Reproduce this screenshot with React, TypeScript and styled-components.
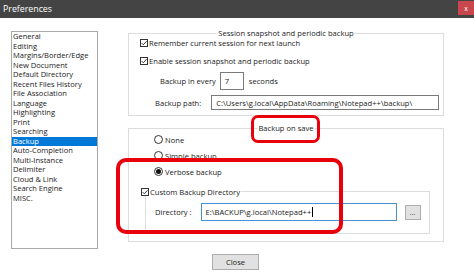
import React from "react";
import styled, { createGlobalStyle } from "styled-components";

const Global = createGlobalStyle`
  html, body { margin: 0; padding: 0; background: #ffffff; }
  body { font-family: "Open Sans", "Noto Sans", sans-serif; }
  * { box-sizing: border-box; }
`;

const FONT = `"Open Sans", "Noto Sans", sans-serif`;

const Window = styled.div`
  position: relative;
  width: 474px;
  height: 272px;
  background: #ffffff;
  display: flex;
  flex-direction: column;
  overflow: hidden;
  font-family: ${FONT};
  font-size: 7.6px;
  color: #1a1a1a;
`;

const TitleBar = styled.div`
  height: 18px;
  flex: none;
  background: #444444;
  display: flex;
  align-items: center;
  justify-content: space-between;
  padding-left: 3px;
`;

const Title = styled.span`
  color: #ffffff;
  font-size: 8.8px;
`;

const CloseX = styled.div`
  width: 16px;
  height: 14px;
  margin-bottom: 2px;
  background: #c8474d;
  color: #ffffff;
  font-size: 7px;
  display: flex;
  align-items: center;
  justify-content: center;
`;

const Body = styled.div`
  display: flex;
  padding: 13px 0 0 11px;
`;

const List = styled.ul`
  list-style: none;
  margin: 0;
  padding: 0;
  width: 87px;
  height: 218px;
  border: 1px solid #a9a9a9;
  flex: none;
  font-size: 7.55px;
`;

const Item = styled.li<{ $selected?: boolean }>`
  height: 9.5px;
  line-height: 9.5px;
  padding-left: 1px;
  white-space: nowrap;
  background: ${(p) => (p.$selected ? "#0078d7" : "transparent")};
  color: ${(p) => (p.$selected ? "#ffffff" : "#1a1a1a")};
`;

const Main = styled.div`
  margin-left: 30px;
  padding-top: 2px;
  width: 316px;
  display: flex;
  flex-direction: column;
  gap: 12px;
`;

const Group = styled.div<{ $h: number }>`
  position: relative;
  width: 316px;
  height: ${(p) => p.$h}px;
  border: 1px solid #dcdcdc;
`;

const Legend = styled.span`
  position: absolute;
  top: -6px;
  left: 50%;
  transform: translateX(-50%);
  background: #ffffff;
  padding: 0 1px;
  white-space: nowrap;
  line-height: 10px;
`;

const SessionBody = styled.div`
  display: flex;
  flex-direction: column;
  padding-top: 5px;
`;

const CheckRow = styled.label<{ $left: number; $mt?: number }>`
  display: flex;
  align-items: center;
  height: 8px;
  gap: 1px;
  padding-left: ${(p) => p.$left}px;
  margin-top: ${(p) => p.$mt ?? 0}px;
  white-space: nowrap;
`;

const FieldRow = styled.div<{ $left: number; $mt: number; $h: number }>`
  display: flex;
  align-items: center;
  height: ${(p) => p.$h}px;
  padding-left: ${(p) => p.$left}px;
  margin-top: ${(p) => p.$mt}px;
  white-space: nowrap;
`;

const TextBox = styled.div<{ $w: number; $h: number; $focus?: boolean }>`
  width: ${(p) => p.$w}px;
  height: ${(p) => p.$h}px;
  border: 1px solid ${(p) => (p.$focus ? "#4a90d4" : "#7a7a7a")};
  background: #ffffff;
  display: flex;
  align-items: center;
  padding-left: 4px;
  white-space: nowrap;
  overflow: hidden;
  flex: none;
`;

const Caret = styled.span`
  display: inline-block;
  width: 1px;
  height: 10px;
  background: #000;
  margin-left: 0.5px;
`;

const RadioList = styled.div`
  display: flex;
  flex-direction: column;
  gap: 7px;
  padding: 6px 0 0 25px;
`;

const RadioRow = styled.label`
  display: flex;
  align-items: center;
  gap: 2px;
  height: 9px;
  white-space: nowrap;
`;

const Circle = styled.span<{ $on?: boolean }>`
  width: 9px;
  height: 9px;
  border-radius: 50%;
  border: 1px solid #333;
  display: flex;
  align-items: center;
  justify-content: center;
  flex: none;
  &::after {
    content: "";
    width: 5px;
    height: 5px;
    border-radius: 50%;
    background: ${(p) => (p.$on ? "#111" : "transparent")};
  }
`;

const Inner = styled.div`
  position: relative;
  margin: 15px 0 0 16px;
  width: 285px;
  height: 43px;
  border: 1px solid #dcdcdc;
  padding: 11px 0 0 9px;
`;

const InnerHead = styled.label`
  position: absolute;
  top: -5px;
  left: -5px;
  display: flex;
  align-items: center;
  gap: 1px;
  height: 9px;
  background: #ffffff;
  padding-right: 1px;
  white-space: nowrap;
`;

const DirRow = styled.div`
  display: flex;
  align-items: center;
  height: 18px;
`;

const DotsButton = styled.div`
  width: 16px;
  height: 15px;
  margin-left: 8px;
  background: #e1e1e1;
  border: 1px solid #adadad;
  font-size: 7px;
  display: flex;
  align-items: center;
  justify-content: center;
  line-height: 1;
  color: #333;
`;

const Footer = styled.div`
  display: flex;
  justify-content: center;
  padding-right: 3px;
  margin-top: 5px;
`;

const Button = styled.div`
  width: 47px;
  height: 16px;
  background: #e1e1e1;
  border: 1px solid #adadad;
  display: flex;
  align-items: center;
  justify-content: center;
`;

const Annotation = styled.div<{ $x: number; $y: number; $w: number; $h: number; $t: number; $r: number }>`
  position: absolute;
  left: ${(p) => p.$x}px;
  top: ${(p) => p.$y}px;
  width: ${(p) => p.$w}px;
  height: ${(p) => p.$h}px;
  border: ${(p) => p.$t}px solid #e8000b;
  border-radius: ${(p) => p.$r}px;
  pointer-events: none;
`;

const CheckBox: React.FC = () => (
  <svg width="8" height="8" viewBox="0 0 8 8" style={{ flex: "none" }}>
    <rect x="0.5" y="0.5" width="7" height="7" fill="#fff" stroke="#333" strokeWidth="1" />
    <path d="M1.6 4.1 L3.3 5.8 L6.5 2.2" fill="none" stroke="#222" strokeWidth="0.9" />
  </svg>
);

const items = [
  "General",
  "Editing",
  "Margins/Border/Edge",
  "New Document",
  "Default Directory",
  "Recent Files History",
  "File Association",
  "Language",
  "Highlighting",
  "Print",
  "Searching",
  "Backup",
  "Auto-Completion",
  "Multi-Instance",
  "Delimiter",
  "Cloud & Link",
  "Search Engine",
  "MISC.",
];

export default function App() {
  return (
    <Window>
      <Global />
      <TitleBar>
        <Title>Preferences</Title>
        <CloseX>x</CloseX>
      </TitleBar>
      <Body>
        <List>
          {items.map((it) => (
            <Item key={it} $selected={it === "Backup"}>
              {it}
            </Item>
          ))}
        </List>
        <Main>
          <Group $h={83}>
            <Legend>Session snapshot and periodic backup</Legend>
            <SessionBody>
              <CheckRow $left={11}>
                <CheckBox />
                <span>Remember current session for next launch</span>
              </CheckRow>
              <CheckRow $left={11} $mt={10}>
                <CheckBox />
                <span>Enable session snapshot and periodic backup</span>
              </CheckRow>
              <FieldRow $left={31} $mt={7} $h={18}>
                <span>Backup in every</span>
                <TextBox $w={24} $h={18} style={{ marginLeft: 4 }}>
                  7
                </TextBox>
                <span style={{ marginLeft: 5 }}>seconds</span>
              </FieldRow>
              <FieldRow $left={26} $mt={5} $h={15}>
                <span>Backup path:</span>
                <TextBox $w={228} $h={15} style={{ marginLeft: 10 }}>
                  C:\Users\g.local\AppData\Roaming\Notepad++\backup\
                </TextBox>
              </FieldRow>
            </SessionBody>
          </Group>
          <Group $h={114}>
            <Legend>Backup on save</Legend>
            <RadioList>
              <RadioRow>
                <Circle />
                <span>None</span>
              </RadioRow>
              <RadioRow>
                <Circle />
                <span>Simple backup</span>
              </RadioRow>
              <RadioRow>
                <Circle $on />
                <span>Verbose backup</span>
              </RadioRow>
            </RadioList>
            <Inner>
              <InnerHead>
                <CheckBox />
                <span>Custom Backup Directory</span>
              </InnerHead>
              <DirRow>
                <span>Directory :</span>
                <TextBox $w={196} $h={18} $focus style={{ marginLeft: 9 }}>
                  E:\BACKUP\g.local\Notepad++
                  <Caret />
                </TextBox>
                <DotsButton>...</DotsButton>
              </DirRow>
            </Inner>
          </Group>
        </Main>
      </Body>
      <Footer>
        <Button>Close</Button>
      </Footer>
      <Annotation $x={251} $y={115} $w={69} $h={28} $t={3} $r={7} />
      <Annotation $x={116} $y={158} $w={227} $h={76} $t={4} $r={10} />
    </Window>
  );
}
